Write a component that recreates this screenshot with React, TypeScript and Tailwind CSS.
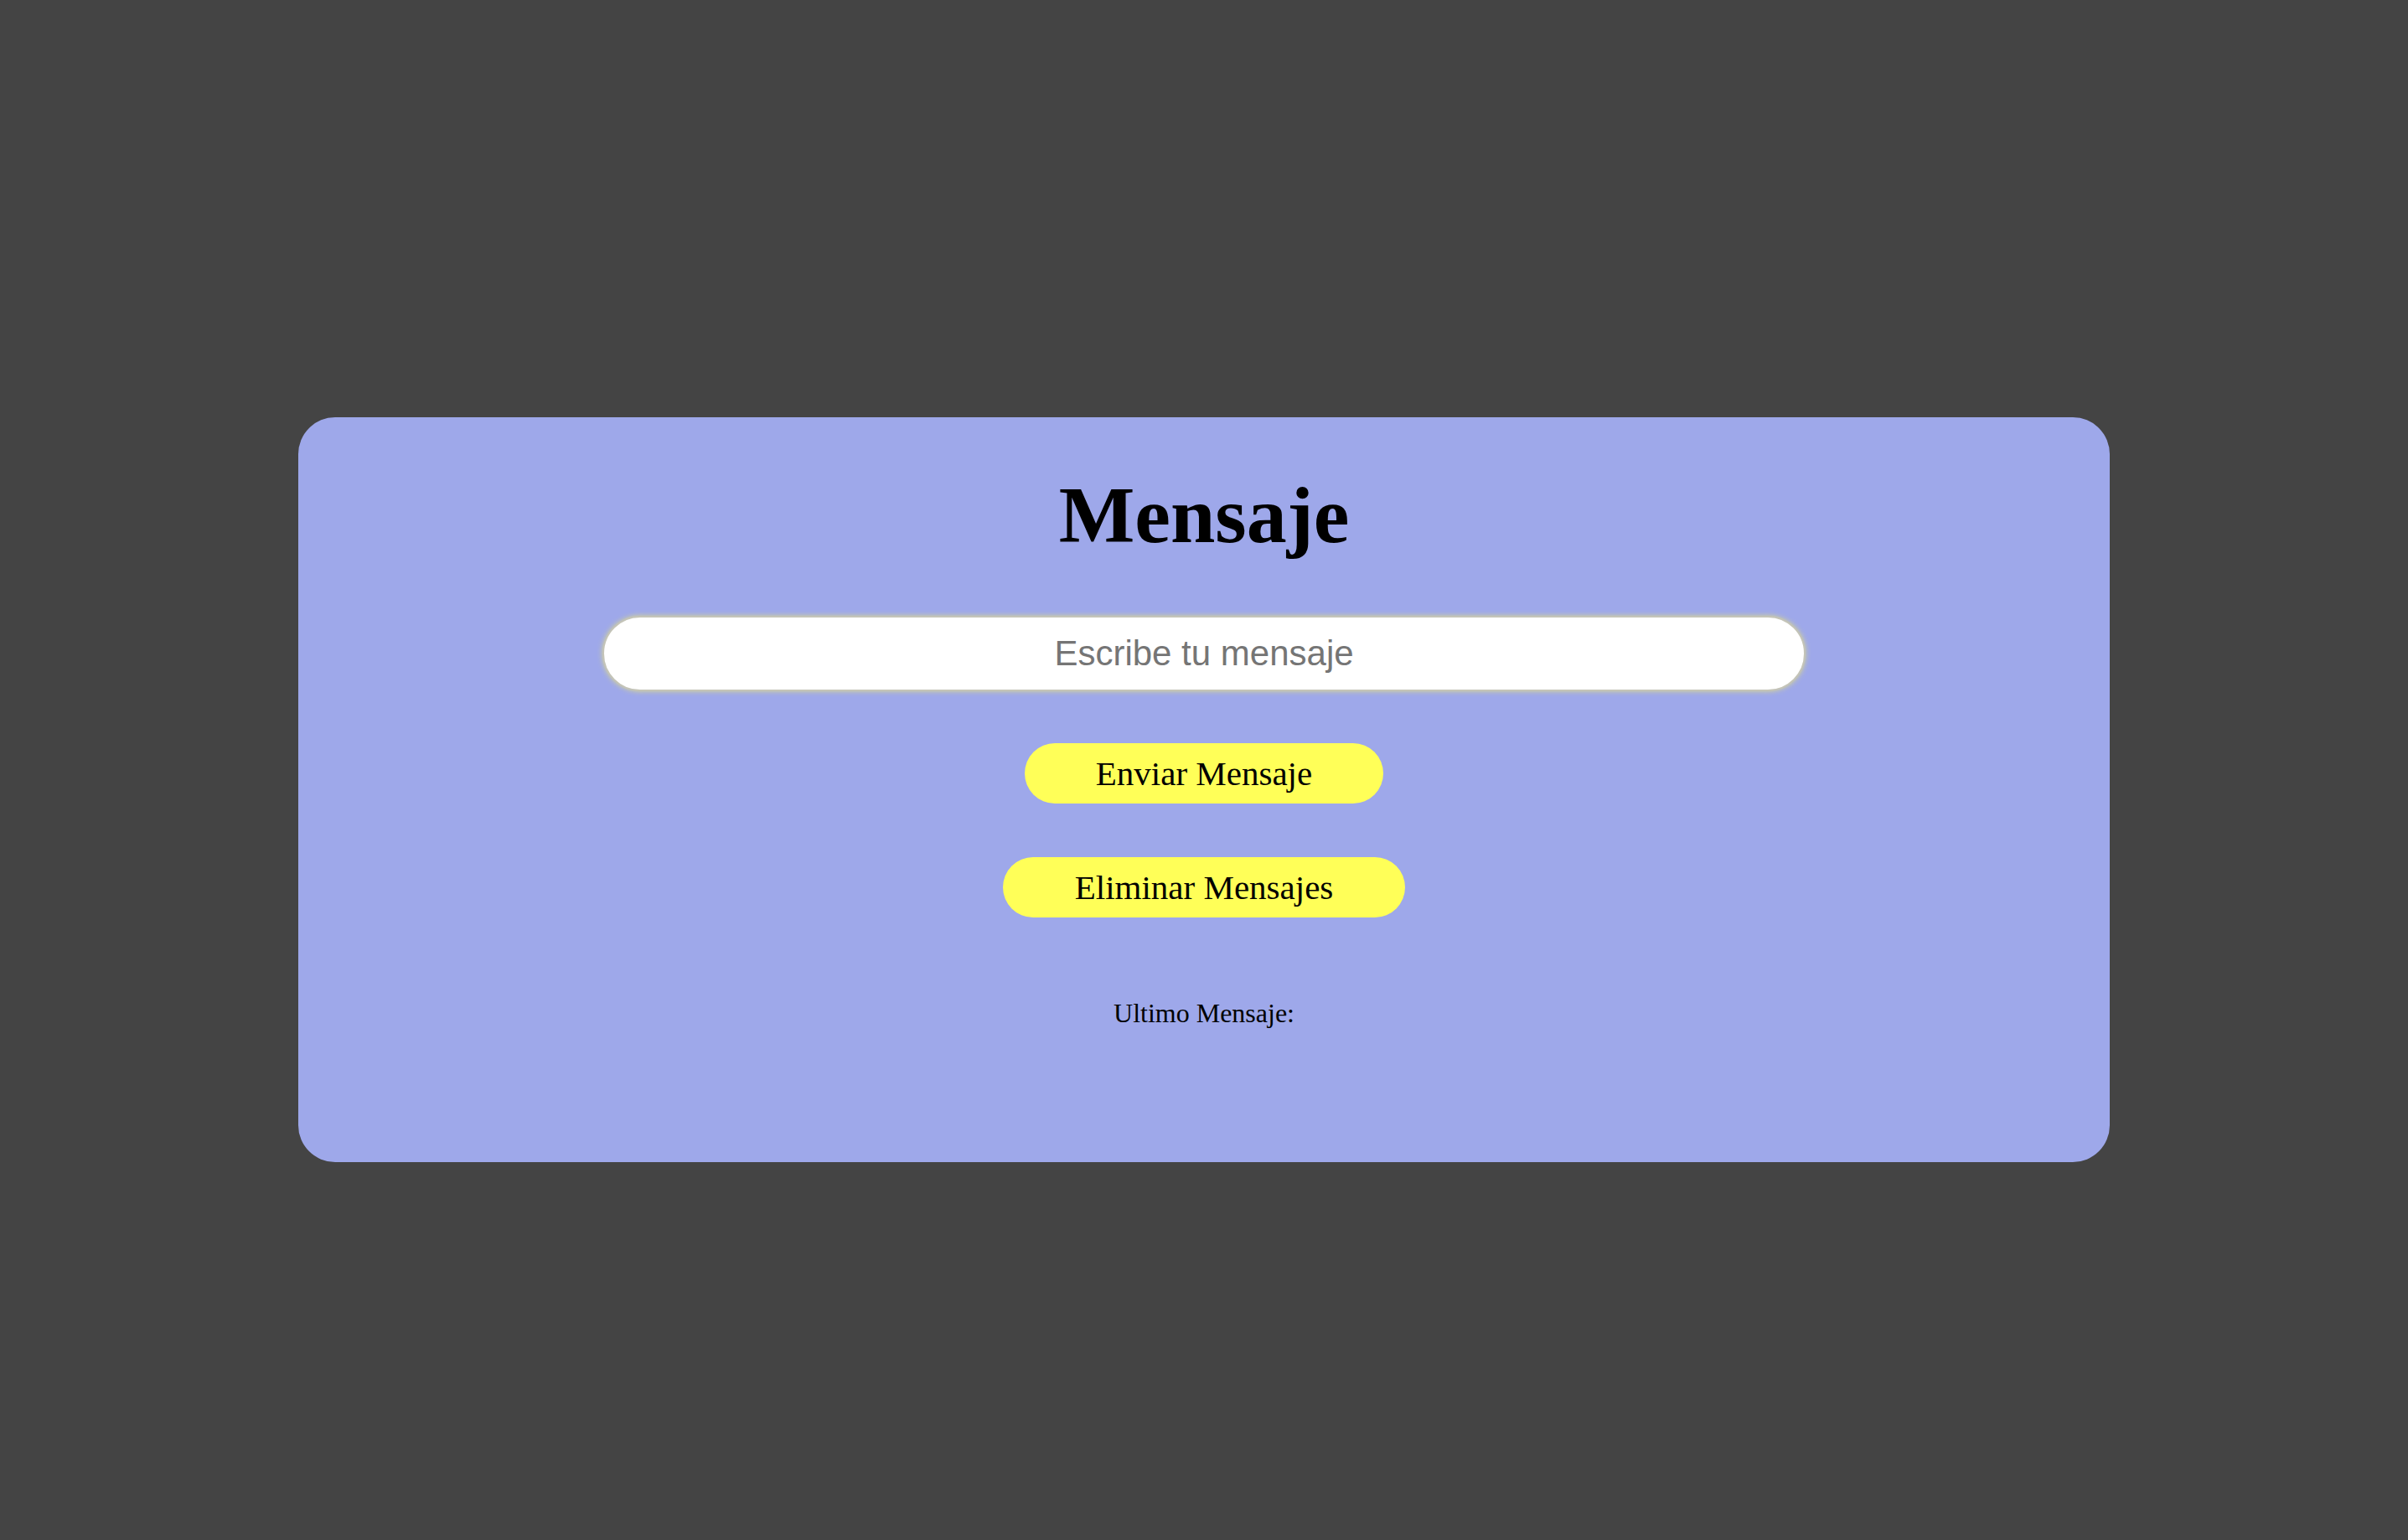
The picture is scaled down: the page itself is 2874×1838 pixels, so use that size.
import React, { useState } from "react";

const App = () => {
  const [texto, setTexto] = useState("");
  const [ultimo, setUltimo] = useState("");

  const enviar = () => {
    setUltimo(texto);
    setTexto("");
  };

  const eliminar = () => {
    setUltimo("");
    setTexto("");
  };

  return (
    <div className="min-h-screen w-full bg-[#444444] flex justify-center pt-[498px] font-['Liberation_Serif','Times_New_Roman',serif]">
      {/* Card */}
      <div className="w-[2162px] h-[889px] bg-[#9ea8ea] rounded-[44px] flex flex-col items-center pt-[64px]">
        <h1 className="text-[96px] leading-[106px] font-bold text-black">
          Mensaje
        </h1>

        <input
          autoFocus
          value={texto}
          onChange={(e) => setTexto(e.target.value)}
          placeholder="Escribe tu mensaje"
          className="mt-[67px] w-[1436px] h-[90px] rounded-full bg-white border-2 border-[#c4c4b8] shadow-[0_0_6px_#d8d890] outline-none text-center text-[42px] font-['Liberation_Sans',Arial,sans-serif] text-black placeholder:text-[#757575] caret-black"
        />

        <button
          onClick={enviar}
          className="mt-[62px] bg-[#ffff58] rounded-full px-[85px] py-[13px] text-[41px] leading-[46px] text-black"
        >
          Enviar Mensaje
        </button>

        <button
          onClick={eliminar}
          className="mt-[64px] bg-[#ffff58] rounded-full px-[86px] py-[13px] text-[41px] leading-[46px] text-black"
        >
          Eliminar Mensajes
        </button>

        <p className="mt-[96px] text-[32px] leading-[36px] text-black">
          Ultimo Mensaje: {ultimo}
        </p>
      </div>
    </div>
  );
};

export default App;
